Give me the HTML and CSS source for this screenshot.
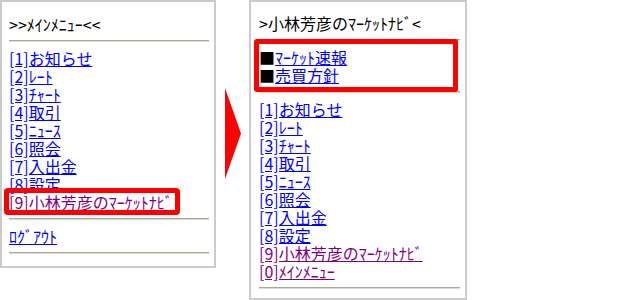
FILE: index.html
```
<!DOCTYPE html>
<html lang="ja">
<head>
    <meta charset="UTF-8">
    <meta name="viewport" content="width=device-width, initial-scale=1.0">
    <title>マーケットナビ メニュー</title>
    <link rel="stylesheet" href="styles.css">
</head>
<body>
    <div class="stage">
        <!-- before: main menu -->
        <div class="panel panel-main">
            <p class="title">&gt;&gt;ﾒｲﾝﾒﾆｭｰ&lt;&lt;</p>
            <hr class="rule">
            <ul class="menu">
                <li><a href="#">[1]お知らせ</a></li>
                <li><a href="#">[2]ﾚｰﾄ</a></li>
                <li><a href="#">[3]ﾁｬｰﾄ</a></li>
                <li><a href="#">[4]取引</a></li>
                <li><a href="#">[5]ﾆｭｰｽ</a></li>
                <li><a href="#">[6]照会</a></li>
                <li><a href="#">[7]入出金</a></li>
                <li><a href="#">[8]設定</a></li>
                <li><span class="mark"><a class="seen" href="#">[9]小林芳彦のﾏｰｹｯﾄﾅﾋﾞ</a></span></li>
            </ul>
            <hr class="rule">
            <ul class="menu">
                <li><a href="#">ﾛｸﾞｱｳﾄ</a></li>
            </ul>
            <hr class="rule">
        </div>

        <svg class="arrow" width="16" height="91" viewBox="0 0 16 91">
            <polygon points="0,0 16,45.5 0,91" fill="#ff0000"/>
        </svg>

        <!-- after: market navi -->
        <div class="panel panel-navi">
            <p class="title">&gt;小林芳彦のﾏｰｹｯﾄﾅﾋﾞ&lt;</p>
            <div class="focus">
                <hr class="rule">
                <ul class="menu">
                    <li><span class="sq">■</span><a href="#">ﾏｰｹｯﾄ速報</a></li>
                    <li><span class="sq">■</span><a href="#">売買方針</a></li>
                </ul>
                <hr class="rule">
            </div>
            <ul class="menu">
                <li><a href="#">[1]お知らせ</a></li>
                <li><a href="#">[2]ﾚｰﾄ</a></li>
                <li><a href="#">[3]ﾁｬｰﾄ</a></li>
                <li><a href="#">[4]取引</a></li>
                <li><a href="#">[5]ﾆｭｰｽ</a></li>
                <li><a href="#">[6]照会</a></li>
                <li><a href="#">[7]入出金</a></li>
                <li><a href="#">[8]設定</a></li>
                <li><a class="seen" href="#">[9]小林芳彦のﾏｰｹｯﾄﾅﾋﾞ</a></li>
                <li><a class="seen" href="#">[0]ﾒｲﾝﾒﾆｭｰ</a></li>
            </ul>
            <hr class="rule">
        </div>
    </div>
</body>
</html>
```

FILE: styles.css
```
body {
    margin: 0;
    background: #fff;
    color: #000;
    font-family: "Noto Sans CJK JP", "Noto Sans", sans-serif;
    font-size: 16px;
    line-height: 18px;
}
.stage {
    display: flex;
    align-items: flex-start;
}
.panel {
    box-sizing: border-box;
    border: 2px solid #cbcbcb;
    padding: 13px 5px 0 7px;
}
.panel-main {
    width: 216px;
    height: 268px;
}
.panel-navi {
    width: 218px;
    height: 300px;
    padding-left: 8px;
    padding-top: 12px;
}
.arrow {
    display: block;
    margin: 88px 8px 0 9px;
}
.title {
    margin: 0;
}
.rule {
    margin: 7px 0;
    height: 0;
    border: 0;
    border-top: 1px solid #aca899;
    border-bottom: 1px solid #dedcd2;
}
.menu {
    list-style: none;
    margin: 0;
    padding: 0;
}
.menu a {
    color: #0000ff;
    text-decoration: underline;
}
.menu a.seen {
    color: #800080;
}
.mark {
    position: relative;
    display: inline-block;
}
.mark::after {
    content: "";
    position: absolute;
    top: -5px;
    right: -7px;
    bottom: -4px;
    left: -5px;
    border: 5px solid #ff0000;
    border-radius: 4px;
}
.focus {
    position: relative;
}
.focus::after {
    content: "";
    position: absolute;
    top: 0;
    right: 2px;
    bottom: 1px;
    left: -5px;
    border: 5px solid #ff0000;
    border-radius: 3px;
}
.sq {
    color: #000;
}
```
